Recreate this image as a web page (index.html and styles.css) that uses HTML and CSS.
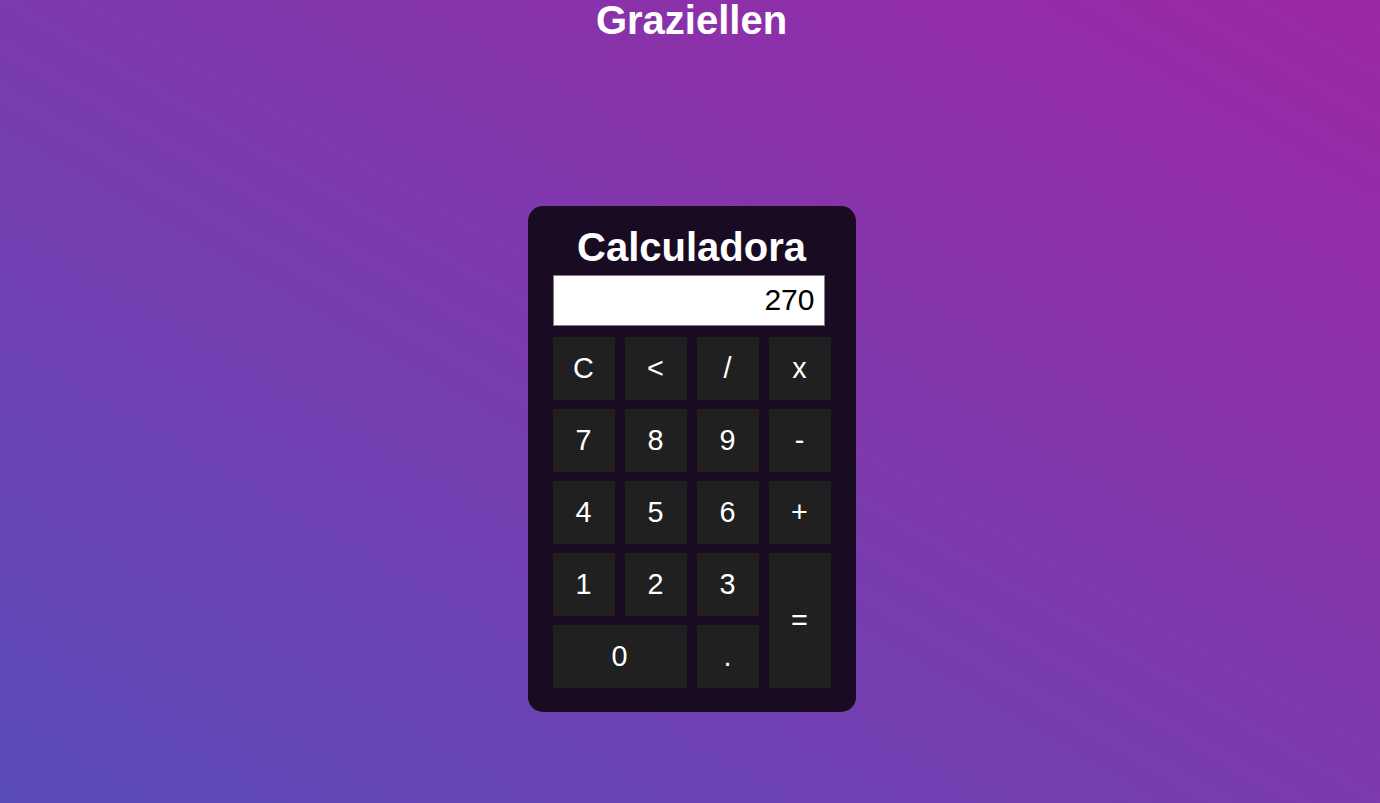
FILE: index.html
```html
<!DOCTYPE html>
<html lang="pt-BR">
<head>
<meta charset="utf-8">
<title>Graziellen</title>
<link rel="stylesheet" href="styles.css">
</head>
<body>
<h1 class="page-title">Graziellen</h1>
<main class="stage">
  <div class="calculator">
    <h2 class="calc-title">Calculadora</h2>
    <div class="display">270</div>
    <div class="keys">
      <button class="key">C</button>
      <button class="key">&lt;</button>
      <button class="key">/</button>
      <button class="key">x</button>
      <button class="key">7</button>
      <button class="key">8</button>
      <button class="key">9</button>
      <button class="key">-</button>
      <button class="key">4</button>
      <button class="key">5</button>
      <button class="key">6</button>
      <button class="key">+</button>
      <button class="key">1</button>
      <button class="key">2</button>
      <button class="key">3</button>
      <button class="key key-equals">=</button>
      <button class="key key-zero">0</button>
      <button class="key">.</button>
    </div>
  </div>
</main>
</body>
</html>
```

FILE: styles.css
```css
html, body {
  margin: 0;
  height: 100%;
}

body {
  padding: 0 0 0 3px;
  box-sizing: border-box;
  font-family: "Liberation Sans", Arial, sans-serif;
  background: linear-gradient(to top right, #5a4cb8 0%, #7b3aae 50%, #9c27a4 100%);
  color: #fff;
  overflow: hidden;
}

.page-title {
  margin: 0;
  font-size: 40px;
  line-height: 40px;
  font-weight: 700;
  text-align: center;
}

.stage {
  display: flex;
  justify-content: center;
  padding-top: 166px;
}

.calculator {
  width: 328px;
  box-sizing: border-box;
  padding: 21px 25px 24px;
  background: #190b22;
  border-radius: 15px;
}

.calc-title {
  margin: 0 0 8px;
  font-size: 40px;
  line-height: 40px;
  font-weight: 700;
  text-align: center;
}

.display {
  width: 272px;
  height: 51px;
  box-sizing: border-box;
  background: #fff;
  border: 1px solid #857a8c;
  color: #000;
  font-size: 30px;
  line-height: 48px;
  text-align: right;
  padding-right: 9px;
}

.keys {
  margin-top: 11px;
  display: grid;
  grid-template-columns: repeat(4, 62px);
  grid-auto-rows: 63px;
  column-gap: 10px;
  row-gap: 9px;
}

.key {
  border: none;
  background: #202020;
  color: #fff;
  font-family: "Liberation Sans", Arial, sans-serif;
  font-size: 28.8px;
  padding: 0;
  margin: 0;
  display: flex;
  align-items: center;
  justify-content: center;
}

.key-equals {
  grid-column: 4;
  grid-row: 4 / span 2;
}

.key-zero {
  grid-column: 1 / span 2;
}
```
